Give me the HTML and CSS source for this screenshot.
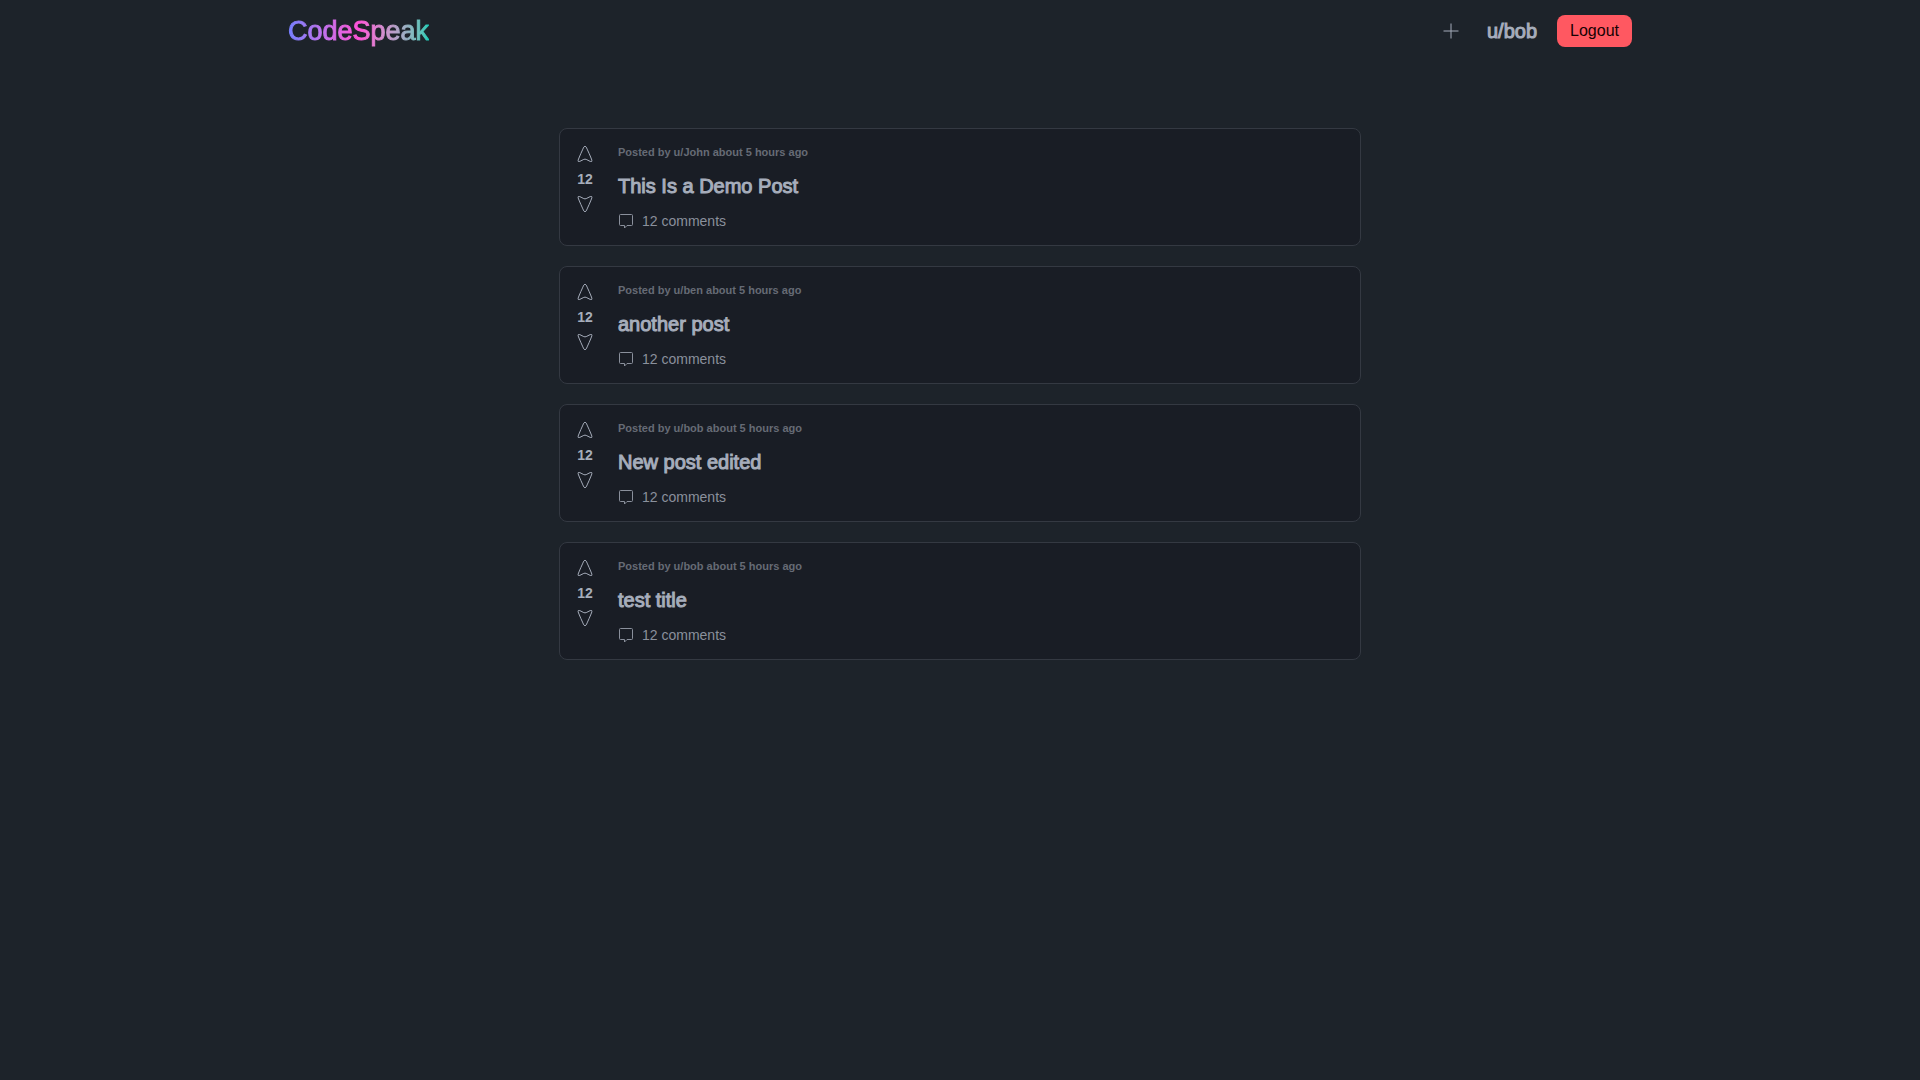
FILE: index.html
```html
<!DOCTYPE html>
<html lang="en">
<head>
<meta charset="utf-8">
<meta name="viewport" content="width=device-width, initial-scale=1">
<title>CodeSpeak</title>
<link rel="stylesheet" href="styles.css">
</head>
<body>
<svg class="sprite" aria-hidden="true">
  <symbol id="arrow" viewBox="0 0 16 18"><path d="M6.700 2.200Q8 .2 9.300 2.200C10.500 5 13.600 11.500 14.900 15.200Q15.300 17.200 13.200 16.400L9.200 14.400Q8 13.900 6.800 14.400L2.800 16.400Q.7 17.200 1.100 15.200C2.400 11.500 5.500 5 6.700 2.200Z"/></symbol>
  <symbol id="comment" viewBox="0 0 16 16"><path d="M2.500 1.500H13.500Q14.500 1.500 14.500 2.500V11.500Q14.500 12.500 13.500 12.500H9L6.500 15V12.500H2.500Q1.500 12.500 1.500 11.500V2.500Q1.500 1.500 2.500 1.500Z"/></symbol>
</svg>
<header class="navbar">
  <a class="logo" href="#">CodeSpeak</a>
  <nav class="actions">
    <a class="new-post" href="#" aria-label="New post"><svg viewBox="0 0 16 16"><path d="M8 .5V15.500M.5 8H15.500"/></svg></a>
    <a class="user" href="#">u/bob</a>
    <button class="logout" type="button">Logout</button>
  </nav>
</header>
<main class="feed">
  <article class="post">
    <div class="votes">
      <button type="button" aria-label="Upvote"><svg><use href="#arrow"/></svg></button>
      <span>12</span>
      <button class="down" type="button" aria-label="Downvote"><svg><use href="#arrow"/></svg></button>
    </div>
    <div class="content">
      <p class="meta">Posted by u/John about 5 hours ago</p>
      <h2><a href="#">This Is a Demo Post</a></h2>
      <a class="comments" href="#"><svg><use href="#comment"/></svg>12 comments</a>
    </div>
  </article>
  <article class="post">
    <div class="votes">
      <button type="button" aria-label="Upvote"><svg><use href="#arrow"/></svg></button>
      <span>12</span>
      <button class="down" type="button" aria-label="Downvote"><svg><use href="#arrow"/></svg></button>
    </div>
    <div class="content">
      <p class="meta">Posted by u/ben about 5 hours ago</p>
      <h2><a href="#">another post</a></h2>
      <a class="comments" href="#"><svg><use href="#comment"/></svg>12 comments</a>
    </div>
  </article>
  <article class="post">
    <div class="votes">
      <button type="button" aria-label="Upvote"><svg><use href="#arrow"/></svg></button>
      <span>12</span>
      <button class="down" type="button" aria-label="Downvote"><svg><use href="#arrow"/></svg></button>
    </div>
    <div class="content">
      <p class="meta">Posted by u/bob about 5 hours ago</p>
      <h2><a href="#">New post edited</a></h2>
      <a class="comments" href="#"><svg><use href="#comment"/></svg>12 comments</a>
    </div>
  </article>
  <article class="post">
    <div class="votes">
      <button type="button" aria-label="Upvote"><svg><use href="#arrow"/></svg></button>
      <span>12</span>
      <button class="down" type="button" aria-label="Downvote"><svg><use href="#arrow"/></svg></button>
    </div>
    <div class="content">
      <p class="meta">Posted by u/bob about 5 hours ago</p>
      <h2><a href="#">test title</a></h2>
      <a class="comments" href="#"><svg><use href="#comment"/></svg>12 comments</a>
    </div>
  </article>
</main>
</body>
</html>
```
FILE: styles.css
```css
* { box-sizing: border-box; }
body {
  margin: 0;
  min-height: 100vh;
  background: #1d232a;
  color: #a6adbb;
  font-family: "Liberation Sans", Arial, sans-serif;
}
a { color: inherit; text-decoration: none; }
button { border: 0; padding: 0; font: inherit; color: inherit; background: none; cursor: pointer; }
svg { display: block; fill: none; stroke: currentColor; }
.sprite { display: none; }

.navbar {
  width: 70%;
  margin: 0 auto;
  height: 62px;
  display: flex;
  align-items: center;
  justify-content: space-between;
}
.logo {
  font-size: 27px;
  line-height: 36px;
  background: linear-gradient(90deg in oklab, #747fff, #ff52d9 50%, #00cdb7);
  -webkit-background-clip: text;
  background-clip: text;
  color: transparent;
  -webkit-text-stroke: 1px transparent;
}
.actions { display: flex; align-items: center; gap: 20px; }
.new-post { padding: 0 8px; }
.new-post svg { width: 16px; height: 16px; }
.user { font-size: 20px; line-height: 28px; -webkit-text-stroke: 1px; }
.logout {
  height: 32px;
  padding: 0 13px;
  border-radius: 8px;
  background: #ff5861;
  color: #160203;
  font-size: 16px;
}

.feed {
  width: 100%;
  max-width: 802px;
  margin: 66px auto 32px;
  display: flex;
  flex-direction: column;
  gap: 20px;
}
.post {
  display: flex;
  gap: 24px;
  padding: 16px 16px 14px;
  border: 1px solid #343942;
  border-radius: 8px;
  background: #191d25;
}
.votes {
  display: flex;
  flex-direction: column;
  align-items: center;
  gap: 8px;
  width: 18px;
  font-size: 14px;
  font-weight: 700;
  line-height: 16px;
}
.votes svg { width: 16px; height: 18px; }
.down svg { transform: rotate(180deg); }
.content { display: flex; flex-direction: column; align-items: flex-start; }
.meta {
  margin: 0 0 10px;
  font-size: 11px;
  line-height: 14px;
  font-weight: 700;
  color: #666b75;
}
h2 {
  margin: 0 0 8px;
  font-size: 20px;
  line-height: 34px;
  font-weight: 400;
  -webkit-text-stroke: 1px;
}
.comments {
  display: flex;
  align-items: center;
  gap: 8px;
  font-size: 14px;
  line-height: 20px;
  color: #8a909c;
}
.comments svg { width: 16px; height: 16px; }
```
